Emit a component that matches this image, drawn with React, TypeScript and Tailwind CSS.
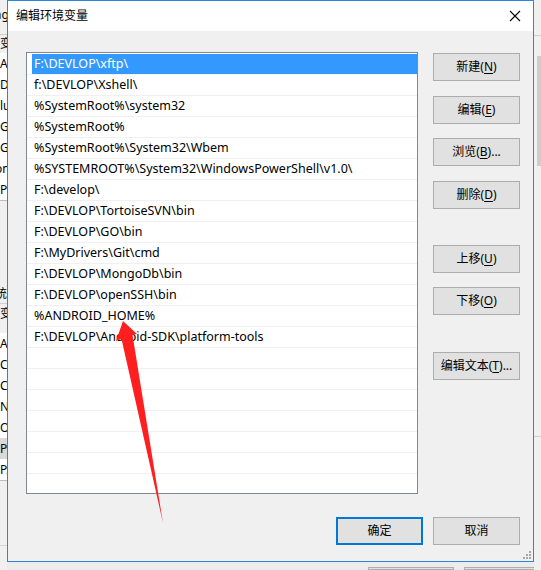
import React from 'react';

// Entries of the PATH variable shown in the list
const paths = [
  'F:\\DEVLOP\\xftp\\',
  'f:\\DEVLOP\\Xshell\\',
  '%SystemRoot%\\system32',
  '%SystemRoot%',
  '%SystemRoot%\\System32\\Wbem',
  '%SYSTEMROOT%\\System32\\WindowsPowerShell\\v1.0\\',
  'F:\\develop\\',
  'F:\\DEVLOP\\TortoiseSVN\\bin',
  'F:\\DEVLOP\\GO\\bin',
  'F:\\MyDrivers\\Git\\cmd',
  'F:\\DEVLOP\\MongoDb\\bin',
  'F:\\DEVLOP\\openSSH\\bin',
  '%ANDROID_HOME%',
  'F:\\DEVLOP\\Android-SDK\\platform-tools',
  '', '', '', '', '', '', '',
];

const font = { fontFamily: '"Noto Sans", "Noto Sans CJK SC", sans-serif' };

interface WinButtonProps {
  label: string;
  hotkey?: string;
  suffix?: string;
  isDefault?: boolean;
  className?: string;
}

/**
 * Classic Windows 10 push button
 */
const WinButton: React.FC<WinButtonProps> = ({ label, hotkey, suffix = '', isDefault, className = '' }) => (
  <div
    className={`w-[87px] h-[28px] flex items-center justify-center bg-[#e1e1e1] text-[12px] text-black ${
      isDefault ? 'border-2 border-[#0078d7]' : 'border border-[#adadad]'
    } ${className}`}
  >
    <span>
      {label}
      {hotkey && (
        <>
          (<span className="underline underline-offset-2">{hotkey}</span>)
        </>
      )}
      {suffix}
    </span>
  </div>
);

// Background window peeking out on the left side
const LeftStrip: React.FC = () => (
  <div className="w-[7px] h-full overflow-hidden bg-[#f0f0f0] text-[12px] text-black whitespace-nowrap">
    <div className="h-[30px] leading-[30px] -ml-[6px]">ng</div>
    <div className="h-[5px] border-b border-[#cfcfcf]" />
    <div className="h-[18px] leading-[18px]">变</div>
    <div className="bg-white border-b border-[#bdbdbd]">
      {['Al', 'Da', 'lu', 'Ge', 'Gi', 'n', 'Pa'].map((t, i) => (
        <div key={i} className={`h-[21px] leading-[21px] ${t === 'n' ? '-ml-[5px]' : ''}`}>
          {t === 'n' ? 'on' : t}
        </div>
      ))}
    </div>
    <div className="h-[83px]" />
    <div className="h-[19px] leading-[19px] -ml-[5px]">统</div>
    <div className="border-t border-[#cfcfcf] h-[20px] leading-[20px]">变</div>
    <div className="h-[10px]" />
    <div className="bg-white border-b border-[#bdbdbd]">
      {['Al', 'Co', 'Cv', 'N', 'O', 'Pa', 'PA'].map((t, i) => (
        <div key={i} className={`h-[21px] leading-[21px] ${t === 'Pa' ? 'bg-[#d9d9d9]' : ''}`}>
          {t}
        </div>
      ))}
    </div>
    <div className="h-[65px] border-b border-[#d6d6d6]" />
  </div>
);

export default function App() {
  return (
    <div className="relative w-[541px] h-[570px] overflow-hidden bg-[#ececec] flex" style={font}>
      <LeftStrip />

      <div className="w-[527px] flex flex-col">
        {/* Dialog window */}
        <div className="h-[562px] flex flex-col border border-[#2c86d4] bg-[#f0f0f0]">
          {/* Title bar */}
          <div className="h-[30px] bg-white flex items-center justify-between pl-[8px] pr-[10px] flex-shrink-0">
            <span className="text-[12px] text-black">编辑环境变量</span>
            <svg width="12" height="12" viewBox="0 0 12 12" className="mr-[2px]">
              <path d="M1 1 L11 11 M11 1 L1 11" stroke="#000" strokeWidth="1.1" />
            </svg>
          </div>

          {/* Body */}
          <div className="relative flex-1 flex flex-col pl-[18px] pr-[13px] pt-[21px]">
            <div className="flex">
              {/* Path list */}
              <div className="w-[392px] h-[442px] border border-[#828790] bg-white overflow-hidden pt-[1px]">
                {paths.map((p, i) => (
                  <div key={i} className="h-[21px] border-b border-[#f0f0f0]">
                    <div
                      className={`ml-[5px] pl-[2px] h-[20px] leading-[20px] text-[12.5px] whitespace-nowrap ${
                        i === 0 ? 'bg-[#3399ff] text-white' : 'text-black'
                      }`}
                    >
                      {p}
                    </div>
                  </div>
                ))}
              </div>

              {/* Action buttons */}
              <div className="ml-[15px] flex flex-col pt-[1px]">
                <WinButton label="新建" hotkey="N" />
                <WinButton label="编辑" hotkey="E" className="mt-[15px]" />
                <WinButton label="浏览" hotkey="B" suffix="..." className="mt-[14px]" />
                <WinButton label="删除" hotkey="D" className="mt-[15px]" />
                <WinButton label="上移" hotkey="U" className="mt-[36px]" />
                <WinButton label="下移" hotkey="O" className="mt-[14px]" />
                <WinButton label="编辑文本" hotkey="T" suffix="..." className="mt-[37px]" />
              </div>
            </div>

            {/* OK / Cancel */}
            <div className="flex justify-end gap-[10px] mt-[23px]">
              <WinButton label="确定" isDefault />
              <WinButton label="取消" />
            </div>

            {/* Resize grip */}
            <svg width="10" height="10" viewBox="0 0 10 10" className="absolute right-[1px] bottom-[1px]">
              {[
                [7, 1],
                [4, 4],
                [7, 4],
                [1, 7],
                [4, 7],
                [7, 7],
              ].map(([x, y], i) => (
                <rect key={i} x={x} y={y} width="2" height="2" fill="#a8a8a8" />
              ))}
            </svg>
          </div>
        </div>

        {/* Background window below the dialog */}
        <div className="flex-1 flex justify-end gap-[10px] pr-[0px] pt-[5px]">
          <div className="w-[86px] border border-[#adadad] bg-[#e1e1e1]" />
          <div className="w-[70px] border border-[#adadad] border-r-0 bg-[#e1e1e1]" />
        </div>
      </div>

      {/* Background window on the right side */}
      <div className="w-[7px] h-full bg-[#f0f0f0] flex flex-col">
        <div className="h-[36px] border-b border-[#cfcfcf]" />
        <div className="h-[400px] flex justify-end">
          <div className="w-[4px] h-[110px] mt-[20px] bg-[#cdcdcd]" />
        </div>
        <div className="border-t border-[#cfcfcf]" />
      </div>

      {/* Red annotation arrow */}
      <svg className="absolute inset-0 pointer-events-none" width="541" height="570" viewBox="0 0 541 570">
        <path d="M123 321 L137 334 L132.5 335 L163 523 L121.5 339 L116 341 Z" fill="#ff1f1f" />
      </svg>
    </div>
  );
}
